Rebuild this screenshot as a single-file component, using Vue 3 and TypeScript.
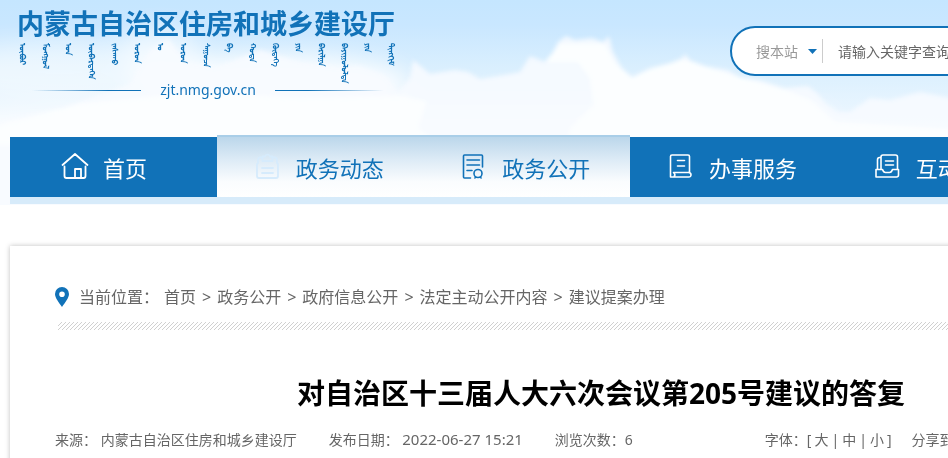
<script setup lang="ts">
import { ref } from 'vue'

interface NavItem {
  label: string
  icon: 'home' | 'clipboard' | 'document' | 'service' | 'inbox'
  active?: boolean
  faded?: boolean
}

const mongolianWords: string[] = [
  'ᠥᠪᠥᠷ', 'ᠮᠣᠩᠭᠣᠯ', 'ᠤᠨ', 'ᠥᠪᠡᠷᠲᠡᠭᠡᠨ', 'ᠵᠠᠰᠠᠬᠤ', 'ᠣᠷᠣᠨ', 'ᠤ', 'ᠣᠷᠣᠨ', 'ᠰᠠᠭᠤᠴᠠ',
  'ᠪᠠ', 'ᠬᠣᠲᠠ', 'ᠬᠥᠳᠡᠭᠡ', 'ᠶᠢᠨ', 'ᠪᠠᠷᠢᠯᠭᠠ', 'ᠪᠠᠶᠢᠭᠤᠯᠤᠯᠲᠠ', 'ᠶᠢᠨ', 'ᠲᠢᠩᠬᠢᠮ',
]

const navItems: NavItem[] = [
  { label: '首页', icon: 'home' },
  { label: '政务动态', icon: 'clipboard', active: true, faded: true },
  { label: '政务公开', icon: 'document', active: true },
  { label: '办事服务', icon: 'service' },
  { label: '互动交流', icon: 'inbox' },
]

const crumbs: string[] = ['首页', '政务公开', '政府信息公开', '法定主动公开内容', '建议提案办理']
const fontSizes: string[] = ['大', '中', '小']

const scope = ref('site')
const keyword = ref('')
</script>

<template>
  <div class="page">
    <svg class="sky" viewBox="0 0 948 205" preserveAspectRatio="none" aria-hidden="true">
      <defs>
        <linearGradient id="sky-fill" x1="0" y1="0" x2="0" y2="1">
          <stop offset="0" stop-color="#c5e6ff" />
          <stop offset="0.12" stop-color="#c9e7ff" />
          <stop offset="0.36" stop-color="#dcf0fe" />
          <stop offset="0.6" stop-color="#edf7ff" />
          <stop offset="1" stop-color="#ffffff" />
        </linearGradient>
        <filter id="soft" x="-5%" y="-20%" width="110%" height="140%"><feGaussianBlur stdDeviation="2" /></filter>
        <filter id="softer" x="-20%" y="-50%" width="140%" height="200%"><feGaussianBlur stdDeviation="12" /></filter>
      </defs>
      <rect width="948" height="205" fill="url(#sky-fill)" />
      <g fill="#ffffff" filter="url(#softer)">
        <ellipse cx="60" cy="72" rx="120" ry="30" opacity="0.5" />
        <ellipse cx="160" cy="50" rx="40" ry="22" opacity="0.6" />
        <ellipse cx="270" cy="85" rx="140" ry="30" opacity="0.9" />
        <rect x="-30" y="110" width="860" height="100" opacity="0.7" />
      </g>
      <g filter="url(#soft)">
        <path fill="#f7fbff" opacity="0.9" d="M-10 124 L60 108 L130 84 L150 50 L168 38 L186 62 L215 68 L260 50 L300 62 L340 68 L360 66 L385 76 L398 92 L410 78 L413 60 L430 74 L455 70 L468 72 L480 79 L510 74 L520 72 L530 56 L545 62 L552 54 L558 42 L566 36 L575 40 L592 38 L603 42 L609 36 L613 52 L622 68 L632 77 L650 68 L670 63 L682 58 L685 54 L690 60 L705 66 L728 70 L740 77 L760 80 L785 88 L808 86 L818 94 L826 104 L838 112 L850 112 L870 98 L890 100 L920 92 L960 100 V210 H-10Z" />
        <path fill="#fcfeff" d="M545 62 L560 44 L604 44 L615 64 L632 78 L650 70 L684 60 L705 67 L740 78 L785 90 L810 100 L835 122 L960 130 V160 L565 160 L570 128 L594 105 L590 78 L578 62Z" />
        <path fill="#fcfeff" d="M-10 128 L80 104 L200 92 L300 98 L400 96 L426 102 L418 128 L440 145 H-10Z" />
      </g>
    </svg>

    <header class="header">
      <a class="brand" href="#">
        <span class="brand-name">内蒙古自治区住房和城乡建设厅</span>
        <span class="brand-mongolian" lang="mn-Mong">
          <span v-for="(word, i) in mongolianWords" :key="i" class="word">{{ word }}</span>
        </span>
        <span class="brand-domain">zjt.nmg.gov.cn</span>
      </a>
      <form class="search" @submit.prevent>
        <select v-model="scope" class="scope" aria-label="搜索范围">
          <option value="site">搜本站</option>
        </select>
        <svg class="caret" viewBox="0 0 9 5" aria-hidden="true"><path d="M0 0h9L4.500 5z" fill="#1172b8" /></svg>
        <input v-model="keyword" class="keyword" type="text" aria-label="关键字" placeholder="请输入关键字查询">
      </form>
    </header>

    <nav class="nav">
      <a v-for="item in navItems" :key="item.label" href="#" class="nav-item" :class="{ active: item.active }">
        <svg class="nav-icon" :class="{ faded: item.faded }" viewBox="0 0 28 28" aria-hidden="true">
          <g v-if="item.icon === 'home'" stroke-width="1.8">
            <path d="M1.500 13 14 2l12.500 11M3.500 14.500V24q0 2 2 2h17q2 0 2-2V14.500M14 26v-9h6v9" />
          </g>
          <g v-else-if="item.icon === 'clipboard'" stroke-width="1.8">
            <path d="M8.500 5.500H6a2 2 0 0 0-2 2V11l-1 1v12a2 2 0 0 0 2 2h17a2 2 0 0 0 2-2V12l-1-1V7.500a2 2 0 0 0-2-2H18.500" />
            <path d="M8.500 9V4.500H11a2.600 2.600 0 0 1 5 0h2.500V9zM8 16h11M8 21h11" />
          </g>
          <g v-else-if="item.icon === 'document'" stroke-width="1.6">
            <path d="M10.500 26H4.500q-1 0-1-1V4q0-1 1-1h17q1 0 1 1v11M7 8h12.500M7 13h12.500M7 18.500h5" />
            <circle cx="18" cy="21.500" r="4" /><path d="M15.500 25 15 26M20.500 25 21 26" />
          </g>
          <g v-else-if="item.icon === 'service'" stroke-width="1.6">
            <path d="M6.500 25H3.500V4.500Q3.500 3 5 3h16q1.500 0 1.500 1.500V20M10.500 8.500h7M10.500 14h7M6.500 20.500h15q2.500 0 2.500 2.300T21.500 25H7q2-2.500-.5-4.500Z" />
          </g>
          <g v-else stroke-width="1.6">
            <path d="M7 17V5q0-2 2-2h12.500q2 0 2 2v12M7 5.500H5.500Q3.500 5.500 3.500 8v9M2 25V17.500h6.500q1 3 3 3h4q2 0 3-3H24.500V23q0 2-2 2zM11.500 9h8M11.500 13h8" />
          </g>
        </svg>
        <span>{{ item.label }}</span>
      </a>
    </nav>

    <main class="article">
      <nav class="crumbs" aria-label="当前位置">
        <svg class="pin" viewBox="0 0 14 20" aria-hidden="true">
          <path fill="#1172b8" fill-rule="evenodd" d="M7 0a7 7 0 0 1 7 7c0 4-4 8.500-7 13C4 15.500 0 11 0 7a7 7 0 0 1 7-7Zm0 4.500a2.800 2.800 0 1 0 0 5.600 2.800 2.800 0 0 0 0-5.600Z" />
        </svg>
        <span class="crumbs-label">当前位置：</span>
        <template v-for="(crumb, i) in crumbs" :key="crumb">
          <span v-if="i > 0" class="sep">&gt;</span>
          <a href="#">{{ crumb }}</a>
        </template>
      </nav>
      <svg class="hatch" aria-hidden="true">
        <defs>
          <pattern id="hatch-lines" width="4" height="8" patternUnits="userSpaceOnUse">
            <path d="M-8 8 0 0M-4 8 4 0M0 8 8 0" stroke="#d0d0d0" stroke-width="1" />
          </pattern>
        </defs>
        <rect width="100%" height="8" fill="url(#hatch-lines)" />
      </svg>

      <h1>对自治区十三届人大六次会议第205号建议的答复</h1>

      <div class="meta">
        <span class="source">来源： 内蒙古自治区住房和城乡建设厅</span>
        <span class="date">发布日期： <time datetime="2022-06-27T15:21">2022-06-27 15:21</time></span>
        <span class="views">浏览次数：6</span>
        <span class="sizes">
          <span>字体：[</span>
          <template v-for="(size, i) in fontSizes" :key="size">
            <span v-if="i > 0">|</span>
            <button type="button">{{ size }}</button>
          </template>
          <span>]</span>
        </span>
        <span class="share">分享到：</span>
      </div>
    </main>
  </div>
</template>

<style>
body {
  background: #fff;
  overflow: hidden;
}
</style>

<style scoped>
.page {
  position: relative;
  overflow: hidden;
  min-height: 100vh;
  font-family: 'Noto Sans', 'Noto Sans CJK SC', sans-serif;
  color: #666;
}

a {
  color: inherit;
  text-decoration: none;
}

.sky {
  position: absolute;
  top: 0;
  left: 0;
  z-index: -1;
  width: 100%;
  height: 205px;
}

.header {
  display: flex;
  justify-content: space-between;
  align-items: flex-start;
  width: 1240px;
  height: 137px;
  padding-left: 12px;
  box-sizing: border-box;
}

.brand {
  display: flex;
  flex-direction: column;
  flex: none;
  width: 392px;
  padding-top: 4px;
  color: #1172b8;
}

.brand-name {
  padding-left: 5px;
  font-size: 27px;
  font-weight: 700;
  line-height: 39px;
  white-space: nowrap;
}

.brand-mongolian {
  display: flex;
  height: 35px;
}

.word {
  writing-mode: vertical-lr;
  flex: none;
  width: 23px;
  font-size: 8px;
  font-weight: 700;
  line-height: 23px;
  white-space: nowrap;
}

.brand-domain {
  display: flex;
  align-items: center;
  gap: 19px;
  padding: 0 20px;
  font-size: 14px;
  line-height: 24px;
}

.brand-domain::before,
.brand-domain::after {
  content: '';
  flex: 1;
  height: 1px;
  background: linear-gradient(to right, transparent, #1172b8 70%);
}

.brand-domain::after {
  background: linear-gradient(to left, transparent, #1172b8 70%);
}

.search {
  display: flex;
  align-items: center;
  width: 510px;
  height: 50px;
  margin-top: 26px;
  padding-left: 24px;
  box-sizing: border-box;
  border: 2px solid #1172b8;
  border-radius: 25px;
  background: #fff;
}

.scope,
.keyword {
  padding: 0;
  border: 0;
  outline: 0;
  background: none;
  font-family: inherit;
  font-size: 14px;
}

.scope {
  appearance: none;
  width: 52px;
  color: #999;
}

.caret {
  width: 9px;
  height: 5px;
  margin-right: 5px;
}

.keyword {
  flex: 1;
  height: 24px;
  padding-left: 15px;
  border-left: 1px solid #ccc;
  color: #666;
}

.keyword::placeholder {
  color: #666;
  opacity: 1;
}

.nav {
  display: grid;
  grid-template-columns: repeat(6, 1fr);
  width: 1240px;
  height: 60px;
  margin-left: 10px;
  background: #1172b8;
  border-bottom: 7px solid #d7ebfa;
}

.nav-item {
  display: flex;
  align-items: center;
  gap: 14px;
  padding-left: 51px;
  font-size: 22px;
  color: #fff;
  white-space: nowrap;
}

.nav-item.active {
  margin-top: -2px;
  padding-top: 2px;
  background: linear-gradient(#b8d5ea, #ddebf6 40%, #fafcfe 75%, #fff);
  box-shadow: inset 0 2px #a9cee8;
  color: #1172b8;
}

.nav-item:not(:first-child) {
  padding-left: 37px;
}

.nav-icon {
  width: 28px;
  height: 28px;
  margin-top: -2px;
  fill: none;
  stroke: currentColor;
  stroke-linecap: round;
  stroke-linejoin: round;
}

.nav-item:not(:first-child) .nav-icon {
  margin-right: 0;
}

.nav-icon.faded {
  color: #d6ebfc;
}

.article {
  width: 1182px;
  margin: 42px 0 0 10px;
  padding: 36px 45px 20px;
  box-sizing: border-box;
  background: #fff;
  box-shadow: 0 0 5px rgba(0, 0, 0, 0.25);
}

.crumbs {
  display: flex;
  align-items: center;
  font-size: 16px;
  line-height: 30px;
}

.pin {
  width: 14px;
  height: 20px;
  margin-right: 10px;
}

.crumbs-label {
  margin-right: 5px;
}

.sep {
  margin: 0 6px;
}

.hatch {
  display: block;
  width: 100%;
  height: 8px;
  margin: 10px 0 0 3px;
}

h1 {
  margin: 43px 0 0;
  font-size: 28px;
  line-height: 40px;
  text-align: center;
  color: #000;
}

.meta {
  display: flex;
  align-items: baseline;
  margin-top: 16px;
  font-size: 14px;
  line-height: 20px;
  white-space: nowrap;
}

.source,
.date {
  margin-right: 32px;
}

.date time {
  font-size: 15px;
}

.sizes {
  display: flex;
  gap: 3px;
  margin-left: 132px;
}

.sizes button {
  padding: 0;
  border: 0;
  background: none;
  font: inherit;
  color: inherit;
}

.share {
  margin-left: 20px;
}
</style>
